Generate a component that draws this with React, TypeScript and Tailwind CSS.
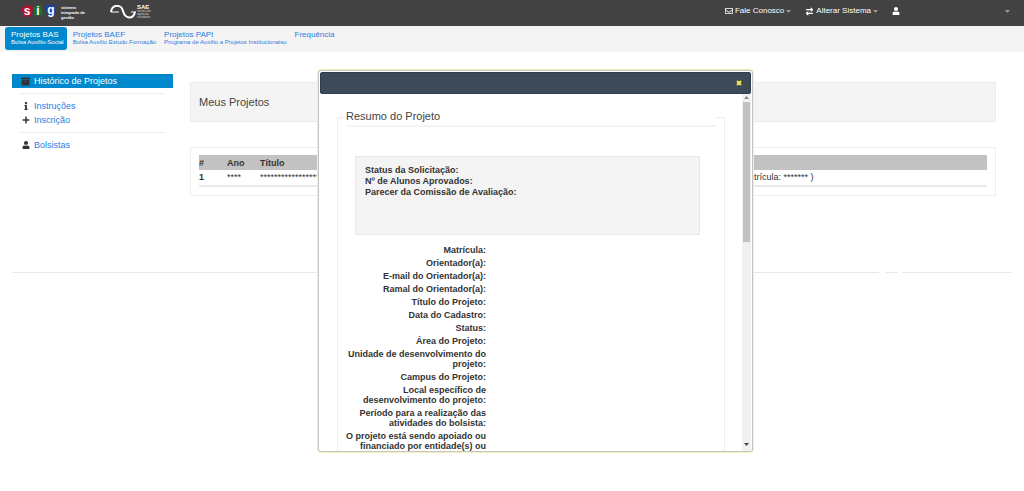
import React from "react";
import { FaArchive, FaInfo, FaPlus, FaRegEnvelope, FaUser } from "react-icons/fa";
import { LuArrowRightLeft } from "react-icons/lu";

type Tab = {
	title: string;
	subtitle?: string;
	active?: boolean;
};

const tabs: Tab[] = [
	{ title: "Projetos BAS", subtitle: "Bolsa Auxílio-Social", active: true },
	{ title: "Projetos BAEF", subtitle: "Bolsa Auxílio Estudo Formação" },
	{ title: "Projetos PAPI", subtitle: "Programa de Auxílio a Projetos Institucionaiso" },
	{ title: "Frequência" },
];

// long labels break where the form wraps them
const fields = [
	"Matrícula:",
	"Orientador(a):",
	"E-mail do Orientador(a):",
	"Ramal do Orientador(a):",
	"Título do Projeto:",
	"Data do Cadastro:",
	"Status:",
	"Área do Projeto:",
	"Unidade de desenvolvimento do\nprojeto:",
	"Campus do Projeto:",
	"Local específico de\ndesenvolvimento do projeto:",
	"Período para a realização das\natividades do bolsista:",
	"O projeto está sendo apoiado ou\nfinanciado por entidade(s) ou",
];

function SigLogo() {
	return (
		<svg width="36" height="16" viewBox="0 0 36 16" aria-label="sig">
			<path d="M0 4 L7 1 L12 3 L11 12 L3 13 Z" fill="#b3122c" />
			<path d="M12 3 L20 1 L22 10 L14 13 Z" fill="#17703a" />
			<path d="M24 2 L33 0 L35 10 L27 13 Z" fill="#1a3fae" />
			<g fill="#fff" fontFamily="Liberation Sans, sans-serif" fontWeight="700" fontSize="12" textAnchor="middle">
				<text x="6" y="11">s</text>
				<text x="17" y="11">i</text>
				<text x="30" y="10">g</text>
			</g>
		</svg>
	);
}

function SaeLogo() {
	return (
		<svg width="27" height="14" viewBox="0 0 27 14" fill="none" stroke="#fff">
			<path d="M1 7 C2 -1 11 -1 13 6 C15 14 23 15 25 7" strokeWidth="2" />
			<path d="M1 7 H9 M21 7 H26" strokeWidth="1" />
		</svg>
	);
}

function Header() {
	return (
		<header className="flex h-[26px] items-start bg-[#424242] text-[8px] leading-[10px] text-white">
			<div className="flex items-center gap-1 pl-[21px] pt-1">
				<SigLogo />
				<p className="text-[4px] font-bold leading-[5px]">
					sistema
					<br />
					integrado de
					<br />
					gestão
				</p>
			</div>
			<div className="flex items-center pl-[25px] pt-1">
				<SaeLogo />
				<div className="text-[3px] leading-[3px] text-gray-300">
					<b className="block text-[6px] leading-[6px] text-white">SAE</b>
					serviço de
					<br />
					apoio ao
					<br />
					estudante
				</div>
			</div>
			<nav className="ml-auto flex items-center pr-[14px] pt-[6px]">
				<button type="button" className="mr-[14px] flex items-center gap-[2px]">
					<FaRegEnvelope size={8} />
					Fale Conosco
					<Caret />
				</button>
				<button type="button" className="mr-[14px] flex items-center gap-[2px]">
					<LuArrowRightLeft size={9} strokeWidth={3} />
					Alterar Sistema
					<Caret />
				</button>
				<button type="button" className="flex w-[118px] items-center justify-between" aria-label="Usuário">
					<FaUser size={8} />
					<Caret />
				</button>
			</nav>
		</header>
	);
}

function Caret() {
	return (
		<svg width="5" height="3" viewBox="0 0 5 3" className="mt-px">
			<path d="M0 0 H5 L2.5 3 Z" fill="#999" />
		</svg>
	);
}

function Tabs() {
	return (
		<nav className="flex h-[26px] items-start gap-1 bg-[#f4f4f4] pl-[5px] pt-px">
			{tabs.map((tab) => (
				<a
					key={tab.title}
					href="#"
					className={
						tab.active
							? "h-[23px] rounded-[3px] bg-[#0088cc] pl-[6px] pr-[3px] pt-1 text-white"
							: "h-[23px] px-[2px] pt-1 text-[#2a7de1]"
					}
				>
					<span className="block text-[8px] leading-[8px]">{tab.title}</span>
					<small className="block whitespace-nowrap text-[6px] leading-[7px]">{tab.subtitle}</small>
				</a>
			))}
		</nav>
	);
}

function Sidebar() {
	return (
		<aside className="w-[161px] shrink-0 pt-[22px] text-[9px] leading-[14px] text-[#2a7de1]">
			<a href="#" className="flex items-center gap-1 bg-[#0088cc] pl-[9px] text-white">
				<FaArchive size={9} color="#333" />
				Histórico de Projetos
			</a>
			<hr className="mx-2 mb-[5px] mt-[5px] border-[#eee]" />
			<a href="#" className="flex items-center gap-1 pl-[10px]">
				<FaInfo size={8} color="#333" />
				Instruções
			</a>
			<a href="#" className="flex items-center gap-1 pl-[10px]">
				<FaPlus size={8} color="#333" />
				Inscrição
			</a>
			<hr className="mx-2 my-[5px] border-[#eee]" />
			<a href="#" className="flex items-center gap-1 pl-[10px]">
				<FaUser size={8} color="#333" />
				Bolsistas
			</a>
		</aside>
	);
}

function ProjectList() {
	return (
		<main className="mr-4 flex-1 pt-[30px]">
			<h1 className="border border-[#eaeaea] bg-[#f4f4f4] px-2 py-[11px] text-[11px] leading-4 text-[#444]">
				Meus Projetos
			</h1>
			<div className="mt-[25px] border border-[#eee] px-2 pb-2 pt-[7px]">
				<table className="w-full table-fixed text-left text-[9px] leading-[14px] text-[#333]">
					<thead className="bg-[#c2c2c2]">
						<tr className="h-[15px]">
							<th className="w-[28px]">#</th>
							<th className="w-[33px]">Ano</th>
							<th className="w-[494px]">Título</th>
							<th />
						</tr>
					</thead>
					<tbody>
						<tr className="h-4 border-b-2 border-[#eaeaea] align-top">
							<th>1</th>
							<td>****</td>
							<td>*******************</td>
							<td>trícula: ******* )</td>
						</tr>
					</tbody>
				</table>
			</div>
		</main>
	);
}

function ProjectDialog() {
	return (
		<section
			role="dialog"
			aria-label="Resumo do Projeto"
			className="absolute left-[318px] top-[70px] flex h-[382px] w-[435px] flex-col rounded-[3px] border border-[#c4c4c4] bg-white p-px pb-0 ring-1 ring-[#f3f3b8]"
		>
			<div className="flex h-[22px] shrink-0 items-center justify-end rounded-[2px] border border-[#2c3e50] bg-[#3d4a58] pr-2">
				<button type="button" aria-label="Fechar" className="text-[#f0e94e]">
					<svg width="6" height="6" viewBox="0 0 6 6" stroke="currentColor" strokeWidth="2">
						<path d="M1 1 L5 5 M5 1 L1 5" />
					</svg>
				</button>
			</div>
			<div className="flex min-h-0 flex-1">
				<div className="flex-1 overflow-hidden pl-[17px] pr-[17px] pt-[13px]">
					<fieldset className="h-[420px] border border-[#eee] px-2 text-[9px] font-bold text-[#333]">
						<legend className="w-full border-b-2 border-[#f4f4f4] text-[11px] font-normal leading-[18px] text-[#444]">
							Resumo do Projeto
						</legend>
						<div className="ml-[9px] mr-4 mt-[29px] h-[79px] border border-[#e8e8e8] bg-[#f4f4f4] px-[9px] pt-2 leading-[11px]">
							<p>Status da Solicitação:</p>
							<p>Nº de Alunos Aprovados:</p>
							<p>Parecer da Comissão de Avaliação:</p>
						</div>
						<dl className="mt-[10px] w-[140px] text-right leading-[10px]">
							{fields.map((field) => (
								<dt key={field} className="mb-[3px] flex justify-end whitespace-pre">
									{field}
								</dt>
							))}
						</dl>
					</fieldset>
				</div>
				<div className="flex w-[9px] flex-col items-center bg-[#f0f0f0]">
					<svg width="5" height="5" viewBox="0 0 5 5" className="mb-[2px] mt-px">
						<path d="M0 4 L2.5 1 L5 4 Z" fill="#888" />
					</svg>
					<div className="h-[140px] w-[7px] bg-[#c1c1c1]" />
					<svg width="5" height="5" viewBox="0 0 5 5" className="mb-1 mt-auto">
						<path d="M0 1 L2.5 4 L5 1 Z" fill="#444" />
					</svg>
				</div>
			</div>
		</section>
	);
}

export default function App() {
	return (
		<div className="relative min-h-screen bg-white font-['Liberation_Sans',Arial,sans-serif]">
			<Header />
			<Tabs />
			<div className="flex gap-[17px] pl-3 pr-3">
				<Sidebar />
				<ProjectList />
			</div>
			<div className="mt-[76px] flex px-3">
				<hr className="flex-1 border-[#e8e8e8]" />
				<hr className="ml-[7px] w-3 border-[#e8e8e8]" />
				<hr className="ml-1 w-[110px] border-[#e8e8e8]" />
			</div>
			<ProjectDialog />
		</div>
	);
}
